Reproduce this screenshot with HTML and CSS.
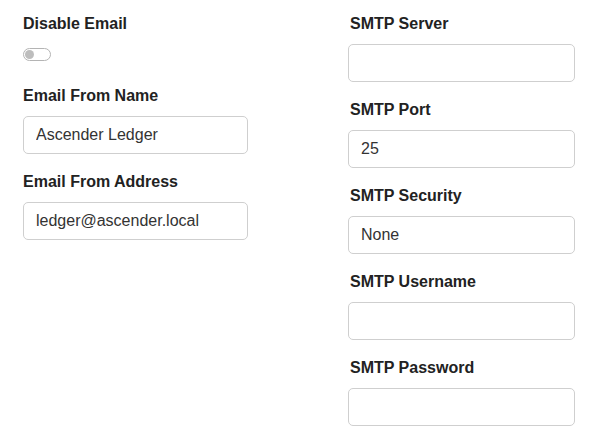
FILE: index.html
```html
<!DOCTYPE html>
<html>
<head>
<meta charset="utf-8">
<link rel="stylesheet" href="styles.css">
</head>
<body>
<div class="settings">
  <div class="col col-left">
    <div class="group group-toggle">
      <label class="lbl">Disable Email</label>
      <span class="toggle"><span class="knob"></span></span>
    </div>
    <div class="group">
      <label class="lbl">Email From Name</label>
      <input class="field" type="text" value="Ascender Ledger">
    </div>
    <div class="group">
      <label class="lbl">Email From Address</label>
      <input class="field" type="text" value="ledger@ascender.local">
    </div>
  </div>
  <div class="col col-right">
    <div class="group">
      <label class="lbl">SMTP Server</label>
      <input class="field" type="text" value="">
    </div>
    <div class="group">
      <label class="lbl">SMTP Port</label>
      <input class="field" type="text" value="25">
    </div>
    <div class="group">
      <label class="lbl">SMTP Security</label>
      <input class="field" type="text" value="None">
    </div>
    <div class="group">
      <label class="lbl">SMTP Username</label>
      <input class="field" type="text" value="">
    </div>
    <div class="group">
      <label class="lbl">SMTP Password</label>
      <input class="field" type="password" value="">
    </div>
  </div>
</div>
</body>
</html>
```

FILE: styles.css
```css
html, body {
  margin: 0;
  padding: 0;
  background: #ffffff;
}
body {
  font-family: "Liberation Sans", Arial, sans-serif;
  color: #222222;
}
.settings {
  display: grid;
  grid-template-columns: 225px 227px;
  column-gap: 100px;
  padding: 13px 23px 0 23px;
  align-items: start;
}
.col {
  display: flex;
  flex-direction: column;
}
.group {
  display: flex;
  flex-direction: column;
  margin-bottom: 17px;
}
.group-toggle {
  margin-bottom: 24px;
}
.lbl {
  font-size: 16px;
  font-weight: bold;
  line-height: 22px;
  margin-bottom: 9px;
  color: #222222;
}
.col-right .lbl {
  padding-left: 2px;
}
.group-toggle .lbl {
  margin-bottom: 13px;
}
.field {
  box-sizing: border-box;
  height: 38px;
  width: 100%;
  margin: 0;
  padding: 0 12px;
  border: 1px solid #cfcfcf;
  border-radius: 5px;
  background: #ffffff;
  font-family: "Liberation Sans", Arial, sans-serif;
  font-size: 16px;
  color: #333333;
  outline: none;
}
.toggle {
  box-sizing: border-box;
  display: flex;
  align-items: center;
  width: 28px;
  height: 13px;
  border: 1px solid #b4b4b4;
  border-radius: 7px;
  background: #ffffff;
  padding-left: 1px;
}
.knob {
  display: block;
  width: 9px;
  height: 9px;
  border-radius: 50%;
  background: #bdbdbd;
}
```
